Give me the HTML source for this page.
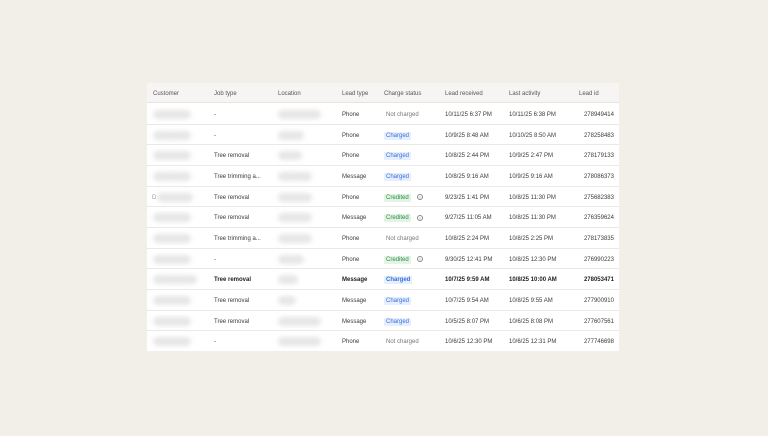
<!DOCTYPE html>
<html><head><meta charset="utf-8"><style>
*{margin:0;padding:0;box-sizing:border-box}
body{width:768px;height:436px;background:#f2efe9;font-family:"Liberation Sans",sans-serif;color:#3a3a3a;position:relative;overflow:hidden}
.t{position:absolute;left:147px;top:83px;width:472px;height:268px;background:#fff}
.h{position:absolute;left:0;top:0;width:472px;height:20px;background:#f6f5f3;border-bottom:1px solid #e6e4e0}
.r{position:absolute;left:0;width:472px;height:20.67px;border-bottom:1px solid #ebe9e6}
.c{position:absolute;top:1px;line-height:20px;font-size:6px;white-space:nowrap}
.h .c{color:#555;line-height:20px;top:0.5px}
.b{position:absolute;top:6px;height:9px;border-radius:5px;background:#e6e6e6;filter:blur(2.5px)}
.badge{display:inline-block;line-height:8px;padding:0 2px;border-radius:1px;font-size:6px}
.ch{background:#e6efff;color:#3b6fd6}
.cr{background:#e3f4e6;color:#2f8a44}
.q{display:inline-block;width:6px;height:6px;border:0.7px solid #888;border-radius:50%;font-size:4px;line-height:5px;text-align:center;color:#888;margin-left:6px;vertical-align:middle}
.nc{color:#777}
.bold .c{font-weight:bold;color:#222}
.id{right:5px;text-align:right}
</style></head><body>
<div class="t">
<div class="h">
<div class="c" style="left:6px">Customer</div>
<div class="c" style="left:67px">Job type</div>
<div class="c" style="left:131px">Location</div>
<div class="c" style="left:195px">Lead type</div>
<div class="c" style="left:237px">Charge status</div>
<div class="c" style="left:298px">Lead received</div>
<div class="c" style="left:362px">Last activity</div>
<div class="c" style="left:432px">Lead id</div>
</div>

<div class="r" style="top:21px"><div class="b" style="left:6px;width:38px"></div><div class="c" style="left:67px">-</div><div class="b" style="left:131px;width:43px"></div><div class="c" style="left:195px">Phone</div><div class="c nc" style="left:239px">Not charged</div><div class="c" style="left:298px">10/11/25 6:37 PM</div><div class="c" style="left:362px">10/11/25 6:38 PM</div><div class="c id">278949414</div></div>

<div class="r" style="top:41.67px"><div class="b" style="left:6px;width:38px"></div><div class="c" style="left:67px">-</div><div class="b" style="left:131px;width:26px"></div><div class="c" style="left:195px">Phone</div><div class="c" style="left:237px"><span class="badge ch">Charged</span></div><div class="c" style="left:298px">10/9/25 8:48 AM</div><div class="c" style="left:362px">10/10/25 8:50 AM</div><div class="c id">278258483</div></div>

<div class="r" style="top:62.33px"><div class="b" style="left:6px;width:38px"></div><div class="c" style="left:67px">Tree removal</div><div class="b" style="left:131px;width:24px"></div><div class="c" style="left:195px">Phone</div><div class="c" style="left:237px"><span class="badge ch">Charged</span></div><div class="c" style="left:298px">10/8/25 2:44 PM</div><div class="c" style="left:362px">10/9/25 2:47 PM</div><div class="c id">278179133</div></div>

<div class="r" style="top:83px"><div class="b" style="left:6px;width:38px"></div><div class="c" style="left:67px">Tree trimming a...</div><div class="b" style="left:131px;width:34px"></div><div class="c" style="left:195px">Message</div><div class="c" style="left:237px"><span class="badge ch">Charged</span></div><div class="c" style="left:298px">10/8/25 9:16 AM</div><div class="c" style="left:362px">10/9/25 9:16 AM</div><div class="c id">278086373</div></div>

<div class="r" style="top:103.67px"><div class="c" style="left:5px;color:#999">D</div><div class="b" style="left:10px;width:36px"></div><div class="c" style="left:67px">Tree removal</div><div class="b" style="left:131px;width:34px"></div><div class="c" style="left:195px">Phone</div><div class="c" style="left:237px"><span class="badge cr">Credited</span><span class="q">?</span></div><div class="c" style="left:298px">9/23/25 1:41 PM</div><div class="c" style="left:362px">10/8/25 11:30 PM</div><div class="c id">275682383</div></div>

<div class="r" style="top:124.33px"><div class="b" style="left:6px;width:38px"></div><div class="c" style="left:67px">Tree removal</div><div class="b" style="left:131px;width:34px"></div><div class="c" style="left:195px">Message</div><div class="c" style="left:237px"><span class="badge cr">Credited</span><span class="q">?</span></div><div class="c" style="left:298px">9/27/25 11:05 AM</div><div class="c" style="left:362px">10/8/25 11:30 PM</div><div class="c id">276359624</div></div>

<div class="r" style="top:145px"><div class="b" style="left:6px;width:38px"></div><div class="c" style="left:67px">Tree trimming a...</div><div class="b" style="left:131px;width:34px"></div><div class="c" style="left:195px">Phone</div><div class="c nc" style="left:239px">Not charged</div><div class="c" style="left:298px">10/8/25 2:24 PM</div><div class="c" style="left:362px">10/8/25 2:25 PM</div><div class="c id">278173835</div></div>

<div class="r" style="top:165.67px"><div class="b" style="left:6px;width:38px"></div><div class="c" style="left:67px">-</div><div class="b" style="left:131px;width:26px"></div><div class="c" style="left:195px">Phone</div><div class="c" style="left:237px"><span class="badge cr">Credited</span><span class="q">?</span></div><div class="c" style="left:298px">9/30/25 12:41 PM</div><div class="c" style="left:362px">10/8/25 12:30 PM</div><div class="c id">276990223</div></div>

<div class="r bold" style="top:186.33px"><div class="b" style="left:6px;width:44px"></div><div class="c" style="left:67px">Tree removal</div><div class="b" style="left:131px;width:20px"></div><div class="c" style="left:195px">Message</div><div class="c" style="left:237px"><span class="badge ch" style="color:#3b6fd6">Charged</span></div><div class="c" style="left:298px">10/7/25 9:59 AM</div><div class="c" style="left:362px">10/8/25 10:00 AM</div><div class="c id">278053471</div></div>

<div class="r" style="top:207px"><div class="b" style="left:6px;width:38px"></div><div class="c" style="left:67px">Tree removal</div><div class="b" style="left:131px;width:18px"></div><div class="c" style="left:195px">Message</div><div class="c" style="left:237px"><span class="badge ch">Charged</span></div><div class="c" style="left:298px">10/7/25 9:54 AM</div><div class="c" style="left:362px">10/8/25 9:55 AM</div><div class="c id">277900910</div></div>

<div class="r" style="top:227.67px"><div class="b" style="left:6px;width:38px"></div><div class="c" style="left:67px">Tree removal</div><div class="b" style="left:131px;width:43px"></div><div class="c" style="left:195px">Message</div><div class="c" style="left:237px"><span class="badge ch">Charged</span></div><div class="c" style="left:298px">10/5/25 8:07 PM</div><div class="c" style="left:362px">10/6/25 8:08 PM</div><div class="c id">277607561</div></div>

<div class="r" style="top:248.33px;border-bottom:none"><div class="b" style="left:6px;width:38px"></div><div class="c" style="left:67px">-</div><div class="b" style="left:131px;width:43px"></div><div class="c" style="left:195px">Phone</div><div class="c nc" style="left:239px">Not charged</div><div class="c" style="left:298px">10/6/25 12:30 PM</div><div class="c" style="left:362px">10/6/25 12:31 PM</div><div class="c id">277746698</div></div>
</div>
</body></html>
